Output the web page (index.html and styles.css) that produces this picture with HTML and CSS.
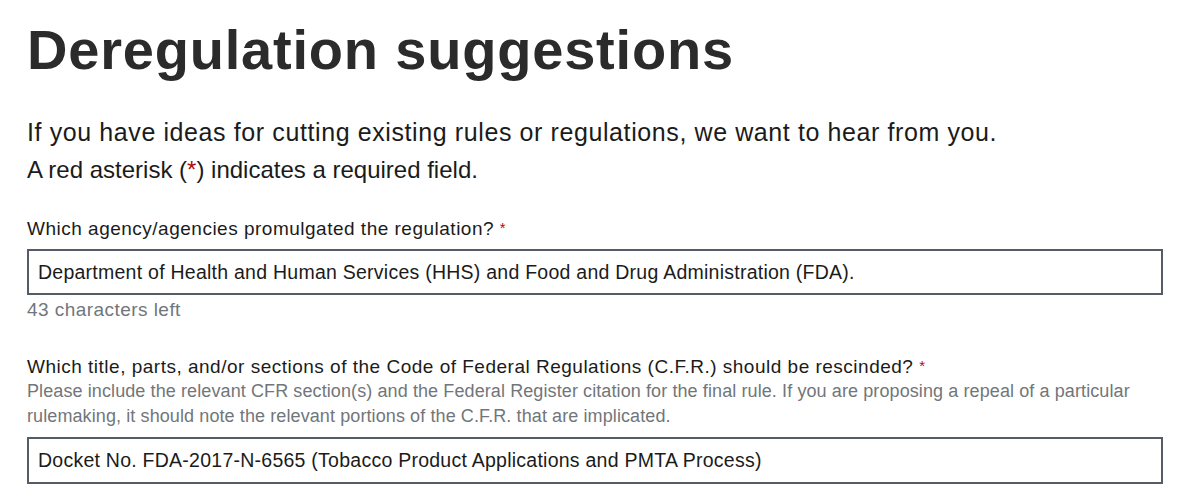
FILE: index.html
```html
<!doctype html>
<html lang="en">
<head>
    <meta charset="UTF-8">
    <meta name="viewport" content="width=device-width, initial-scale=1.0">
    <title>Deregulation suggestions</title>
    <link rel="stylesheet" href="styles.css">
</head>
<body>
    <div class="wrapper">
        <h1 class="title">Deregulation suggestions</h1>
        <div class="intro">
            <p class="lead">If you have ideas for cutting existing rules or regulations, we want to hear from you.</p>
            <p>A red asterisk (<span class="req">*</span>) indicates a required field.</p>
        </div>

        <div class="field">
            <label class="label" for="agency">Which agency/agencies promulgated the regulation? <span class="req">*</span></label>
            <input class="input" id="agency" type="text" value="Department of Health and Human Services (HHS) and Food and Drug Administration (FDA).">
            <div class="counter">43 characters left</div>
        </div>

        <div class="field field-cfr">
            <label class="label" for="cfr">Which title, parts, and/or sections of the Code of Federal Regulations (C.F.R.) should be rescinded? <span class="req">*</span></label>
            <div class="hint">Please include the relevant CFR section(s) and the Federal Register citation for the final rule. If you are proposing a repeal of a particular rulemaking, it should note the relevant portions of the C.F.R. that are implicated.</div>
            <input class="input" id="cfr" type="text" value="Docket No. FDA-2017-N-6565 (Tobacco Product Applications and PMTA Process)">
        </div>
    </div>
</body>
</html>
```

FILE: styles.css
```css
*{padding: 0;margin: 0;box-sizing: border-box}
body{
    font-family: "Liberation Sans", Arial, Helvetica, sans-serif;
    color: #1b1b1b;
    background: #fff;
}
.wrapper{
    width: 1136px;
    margin-left: 27px;
}
.title{
    font-size: 56px;
    line-height: 64px;
    font-weight: bold;
    letter-spacing: 0.8px;
    color: #2b2b2b;
    margin-top: 18px;
}
.intro{
    margin-top: 32px;
    font-size: 24px;
    line-height: 37px;
}
.intro .lead{
    font-size: 25px;
    letter-spacing: 0.6px;
}
.req{
    color: #b50909;
}
.field{
    margin-top: 27px;
}
.field-cfr{
    margin-top: 31px;
}
.label{
    display: block;
    font-size: 19px;
    line-height: 25px;
    letter-spacing: 0.5px;
}
.label .req{
    font-size: 15px;
    vertical-align: 2px;
}
.hint{
    font-size: 18px;
    line-height: 25px;
    letter-spacing: 0.1px;
    color: #71767a;
}
.input{
    display: block;
    width: 100%;
    height: 46px;
    margin-top: 8px;
    padding: 0 9px;
    border: 2px solid #565c65;
    font-family: inherit;
    font-size: 19.5px;
    letter-spacing: 0.25px;
    color: #1b1b1b;
    background: #fff;
    outline: none;
}
.field-cfr .input{
    height: 47px;
}
.counter{
    margin-top: 2px;
    font-size: 19px;
    line-height: 25px;
    letter-spacing: 0.45px;
    color: #71767a;
}
```
